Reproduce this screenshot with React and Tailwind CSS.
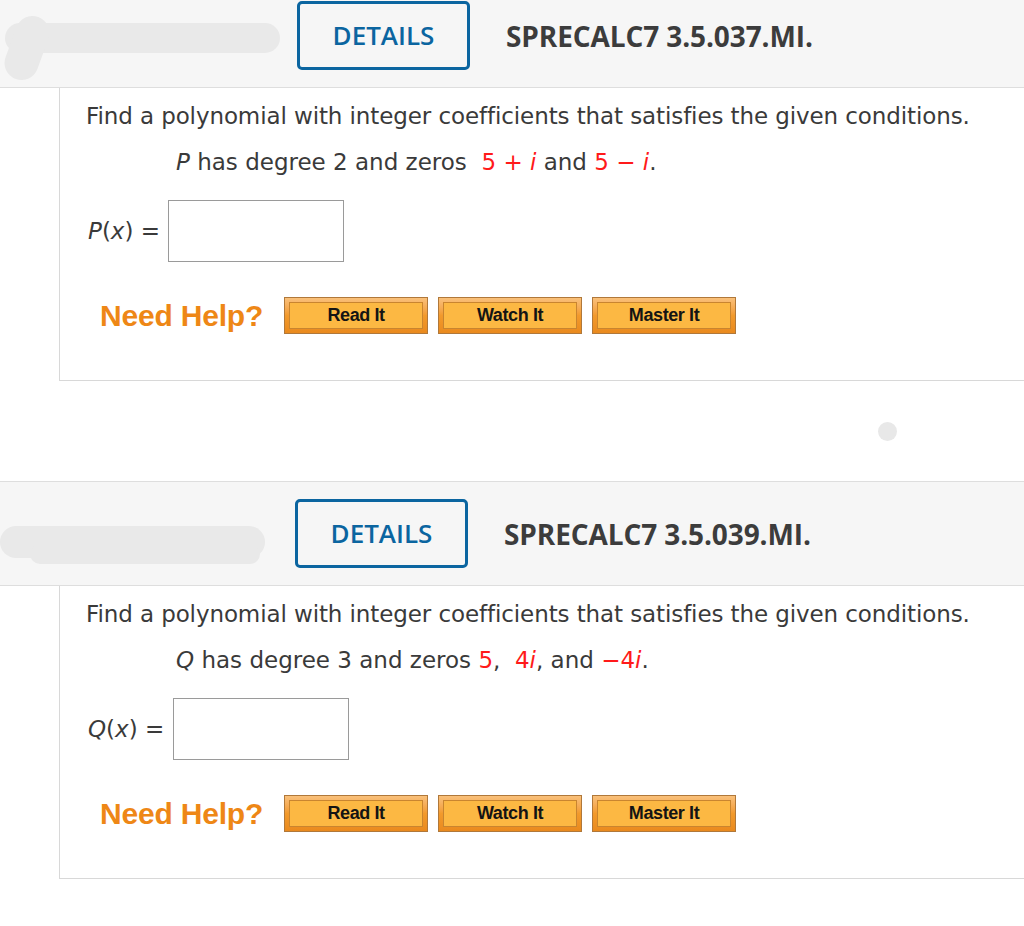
import React from "react";

const sans = { fontFamily: "'Open Sans', 'Noto Sans', sans-serif" };
const body = { fontFamily: "'DejaVu Sans', Verdana, sans-serif" };
const arial = { fontFamily: "'Liberation Sans', Arial, sans-serif" };

const Redacted = ({ first }) => (
    <div className="relative w-[297px] h-full shrink-0">
        {first ? (
            <>
                <div className="absolute left-[5px] top-[22px] w-[275px] h-[30px] rounded-full bg-[#e9e9e9]" />
                <div className="absolute left-[10px] top-[14px] w-[34px] h-[66px] rounded-full bg-[#e9e9e9] rotate-[20deg]" />
            </>
        ) : (
            <>
                <div className="absolute left-0 top-[27px] w-[265px] h-[32px] rounded-full bg-[#e9e9e9]" />
                <div className="absolute left-[30px] top-[45px] w-[230px] h-[20px] rounded-full bg-[#e9e9e9]" />
            </>
        )}
    </div>
);

const Header = ({ code, first }) => (
    <div
        className={`flex bg-[#f6f6f6] border-b border-[#dedede] ${first ? "h-[88px] pt-px pb-[18px] items-start" : "h-[105px] border-t py-[17px] items-center"}`}
        style={sans}
    >
        <Redacted first={first} />
        <div className={`flex items-center ${first ? "" : "-ml-[2px]"}`}>
            <div className="w-[173px] h-[69px] flex items-center justify-center rounded-[5px] border-[3px] border-[#0b65a0] text-[#0b65a0] text-[26px] font-semibold">
                DETAILS
            </div>
            <div className="ml-[36px] text-[28px] font-bold text-[#3c3c3c] tracking-[-0.1px]">{code}</div>
        </div>
    </div>
);

const HelpButton = ({ label }) => (
    <div className="w-[144px] h-[37px] p-[4px] border border-[#b0783a] bg-gradient-to-b from-[#f9c07a] via-[#f29a2c] to-[#e98a1e]">
        <div
            className="h-full flex items-center justify-center border border-[#c9852f] bg-[#fcb843] text-[18px] font-bold text-[#141414] tracking-[-0.4px]"
            style={arial}
        >
            {label}
        </div>
    </div>
);

const Panel = ({ line2, fn, inputLeft }) => (
    <div className="ml-[59px] border-l border-b border-[#d8d8d8] pl-[26px] text-[#3a3a3a]" style={body}>
        <p className="pt-[13px] text-[23px] leading-[30px] tracking-[-0.1px] whitespace-nowrap">
            Find a polynomial with integer coefficients that satisfies the given conditions.
        </p>
        <p className="mt-[16px] ml-[90px] text-[23px] leading-[30px] whitespace-nowrap">{line2}</p>
        <div className="mt-[23px] flex items-center h-[62px]">
            <span className="ml-[2px] text-[23px]">
                <i>{fn}</i>(<i>x</i>) =
            </span>
            <div className={`h-[62px] w-[176px] border border-[#9a9a9a] bg-white ${inputLeft}`} />
        </div>
        <div className="mt-[35px] pb-[46px] flex items-center">
            <span className="ml-[14px] mr-[21px] text-[30px] leading-[37px] font-bold text-[#ee8716] tracking-[-0.2px]" style={arial}>
                Need Help?
            </span>
            <div className="flex gap-[10px]">
                <HelpButton label="Read It" />
                <HelpButton label="Watch It" />
                <HelpButton label="Master It" />
            </div>
        </div>
    </div>
);

export default function App() {
    return (
        <div className="w-[1024px] min-h-[926px] bg-white overflow-hidden">
            <Header code="SPRECALC7 3.5.037.MI." first />
            <Panel
                fn="P"
                inputLeft="ml-[8px]"
                line2={
                    <>
                        <i>P</i> has degree 2 and zeros&nbsp;{" "}
                        <span className="text-[#ff1a1a]">
                            5 + <i>i</i>
                        </span>{" "}
                        and{" "}
                        <span className="text-[#ff1a1a]">
                            5 − <i>i</i>
                        </span>
                        .
                    </>
                }
            />
            <div className="h-[100px] relative">
                <div className="absolute left-[878px] top-[41px] w-[19px] h-[19px] rounded-full bg-[#e8e8e8]" />
            </div>
            <Header code="SPRECALC7 3.5.039.MI." />
            <Panel
                fn="Q"
                inputLeft="ml-[9px]"
                line2={
                    <>
                        <i>Q</i> has degree 3 and zeros <span className="text-[#ff1a1a]">5</span>,&nbsp;{" "}
                        <span className="text-[#ff1a1a]">
                            4<i>i</i>
                        </span>
                        , and{" "}
                        <span className="text-[#ff1a1a]">
                            −4<i>i</i>
                        </span>
                        .
                    </>
                }
            />
        </div>
    );
}
